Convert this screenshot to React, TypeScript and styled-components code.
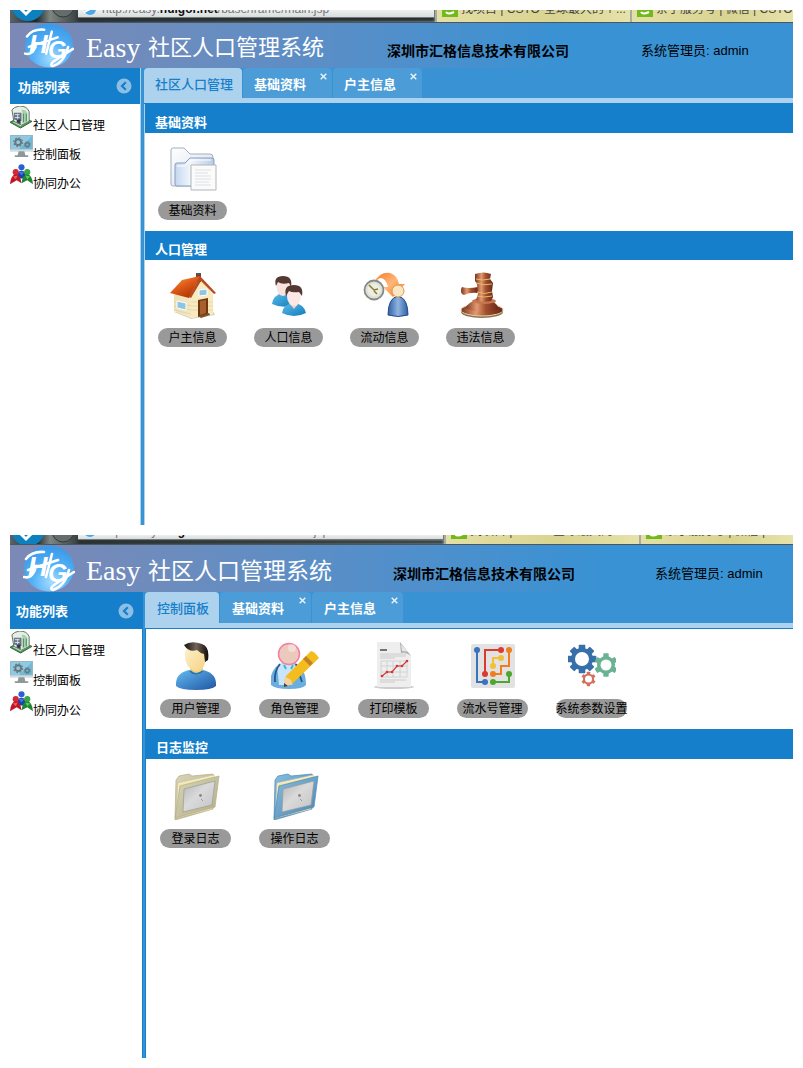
import React from "react";
import styled, { createGlobalStyle } from "styled-components";

const sans = `"Liberation Sans", "Noto Sans CJK SC", sans-serif`;
const blue = "#157fcc";
const midBlue = "#3892d4";
const paleBlue = "#add2ed";

const GlobalStyle = createGlobalStyle`
  * { box-sizing: border-box; }
  body { margin: 0; background: #fff; color: #000; font-family: ${sans}; font-size: 12px; }
  button { font: inherit; color: inherit; border: 0; padding: 0; background: none; cursor: pointer; }
  h1, h2, p, ul { margin: 0; padding: 0; font-weight: 400; }
  svg { display: block; }
`;

const Page = styled.main`
  min-height: 100vh;
  padding: 10px;
  display: grid;
  grid-template-rows: 515fr 523fr;
  gap: 10px;
`;

const Window = styled.section`
  display: flex;
  flex-direction: column;
  min-width: 0;
  overflow: hidden;
`;

const Chrome = styled.div<{ $h: number }>`
  display: flex;
  height: ${(p) => p.$h}px;
  overflow: hidden;
  border-bottom: 1px solid #4d565c;
  background: linear-gradient(90deg, #5c6468 0, #1d2628 26px, #7d8683 40px, #38403f 68px, #b9c4c2 440px);
`;

const NavArrows = styled.div`
  flex: 0 0 68px;
  svg { width: 68px; height: 12px; }
`;

const AddressBar = styled.div<{ $h: number }>`
  flex: 0 1 ${(p) => (p.$h > 10 ? 357 : 366)}px;
  overflow: hidden;
  background: linear-gradient(#edf0ef, #d7dddd);
  border-right: 1px solid #777;
  height: ${(p) => p.$h - 6}px;
  box-shadow: 0 1px #777, 0 5px 3px #263033;
`;

const ChromeLine = styled.div<{ $up: number }>`
  display: flex;
  gap: 5px;
  margin-top: -${(p) => p.$up}px;
  line-height: 16px;
  height: 16px;
  font-size: 12px;
  color: #777;
  white-space: nowrap;
  padding-left: 5px;
  b { color: #111; }
`;

const BrowserTab = styled.div<{ $grow?: boolean }>`
  flex: ${(p) => (p.$grow ? "1 1 0" : "0 0 195px")};
  overflow: hidden;
  border-left: 2px solid #a5aca4;
  background: linear-gradient(90deg, #e4dfa4, #d9d491 60%, #e6e2aa);
  ${ChromeLine} { color: #444; gap: 3px; }
  svg { width: 16px; height: 16px; flex: none; }
`;

const Banner = styled.header<{ $h: number; $reach: number }>`
  display: flex;
  align-items: center;
  height: ${(p) => p.$h}px;
  padding-left: 13px;
  white-space: nowrap;
  background: linear-gradient(90deg, #7c89b6 0, #6b8cbe 170px, #538fca 370px, ${midBlue} ${(p) => p.$reach}px);
`;

const LogoSvg = styled.svg<{ $h: number }>`
  flex: none;
  width: 52px;
  height: ${(p) => p.$h}px;
`;

const Title = styled.h1<{ $size: number }>`
  display: flex;
  align-items: center;
  padding: 4px 0 0 11px;
  line-height: 28px;
  color: #fff;
  font-size: ${(p) => p.$size}px;
`;

const Latin = styled.span`
  width: 62px;
  font-family: "Liberation Serif", serif;
  font-size: 28px;
`;

const Company = styled.p<{ $gap: number }>`
  margin-left: ${(p) => p.$gap}px;
  padding-top: 8px;
  font-size: 14px;
  font-weight: 700;
`;

const Account = styled.p<{ $gap: number }>`
  margin-left: ${(p) => p.$gap}px;
  padding-top: 8px;
  font-size: 13px;
`;

const Body = styled.div`
  flex: 1;
  display: flex;
  min-height: 0;
`;

const Sidebar = styled.nav<{ $w: number }>`
  flex: 0 0 ${(p) => p.$w}px;
`;

const SideHead = styled.div<{ $h: number; $pad: number }>`
  display: flex;
  align-items: center;
  justify-content: space-between;
  height: ${(p) => p.$h}px;
  padding: 0 8px 0 ${(p) => p.$pad}px;
  background: ${blue};
  color: #fff;
  h2 { font-size: 13px; font-weight: 700; }
  svg { width: 16px; height: 16px; }
`;

const SideList = styled.ul<{ $gap: number }>`
  list-style: none;
  padding-top: 2px;
  display: flex;
  flex-direction: column;
  gap: ${(p) => p.$gap}px;
`;

const SideLink = styled.a`
  display: flex;
  align-items: flex-end;
  height: 27px;
  color: #000;
  text-decoration: none;
  line-height: 14px;
  svg { width: 23px; height: 23px; align-self: flex-start; }
`;

const Splitter = styled.div<{ $w: number; $edge: string }>`
  flex: 0 0 ${(p) => p.$w}px;
  background: ${midBlue};
  border-left: 1px solid ${(p) => p.$edge};
`;

const Main = styled.div`
  flex: 1;
  min-width: 0;
  display: flex;
  flex-direction: column;
`;

const TabBar = styled.div<{ $h: number }>`
  display: flex;
  gap: 1px;
  height: ${(p) => p.$h}px;
  background: ${midBlue};
  border-bottom: 1px solid ${blue};
  box-shadow: inset 0 -5px ${paleBlue};
  padding-bottom: 5px;
`;

const TabItem = styled.div<{ $active?: boolean; $pad: number }>`
  position: relative;
  padding: 0 ${(p) => (p.$active ? p.$pad - 2 : p.$pad + 15)}px 0 ${(p) => p.$pad}px;
  border-radius: 4px 4px 0 0;
  background: ${(p) => (p.$active ? paleBlue : "#4b9cd7")};
  color: ${(p) => (p.$active ? blue : "#fff")};
`;

const TabButton = styled.button`
  height: 100%;
  font-size: 13px;
  font-weight: 700;
  white-space: nowrap;
  &[aria-selected="true"] { font-weight: 500; }
`;

const CloseButton = styled.button`
  position: absolute;
  top: 5px;
  right: 5px;
  svg { width: 7px; height: 7px; }
`;

const Panel = styled.div<{ $edge: string }>`
  flex: 1;
  border-left: 1px solid ${(p) => p.$edge};
`;

const SectionHead = styled.h2<{ $h: number }>`
  height: ${(p) => p.$h}px;
  padding: 8px 0 0 10px;
  background: ${blue};
  color: #fff;
  font-size: 13px;
  font-weight: 700;
  line-height: 22px;
`;

const Tiles = styled.div<{ $pad: number; $gap: number }>`
  display: flex;
  flex-wrap: wrap;
  gap: ${(p) => p.$gap}px;
  padding: ${(p) => p.$pad - 1}px ${(p) => p.$pad}px 11px;
`;

const Tile = styled.button<{ $w: number; $gap: number }>`
  display: flex;
  flex-direction: column;
  align-items: center;
  gap: ${(p) => p.$gap}px;
  width: ${(p) => p.$w}px;
  svg { width: 48px; height: 48px; }
`;

const Pill = styled.span`
  display: flex;
  justify-content: center;
  width: 100%;
  height: 19px;
  line-height: 20px;
  border-radius: 10px;
  background: #999;
  white-space: nowrap;
`;

function Logo({ id, h }: { id: string; h: number }) {
  return (
    <LogoSvg $h={h} viewBox="0 0 52 47" role="img" aria-label="HG">
      <defs>
        <radialGradient id={id} cx=".55" cy=".8" r=".75">
          <stop offset="0" stopColor="#a4dcff" />
          <stop offset=".5" stopColor="#55b2f7" />
          <stop offset="1" stopColor="#3b9ae9" />
        </radialGradient>
      </defs>
      <ellipse cx="26" cy="23.500" rx="25" ry="23" fill={`url(#${id})`} />
      <g fill="#fff" fontFamily="Liberation Sans, sans-serif" fontStyle="italic" fontWeight="700">
        <text x="5" y="31" fontSize="27">H</text>
        <text x="25" y="37" fontSize="25">G</text>
      </g>
      <path d="M3 14Q9 6 21 7M1 32Q8 34 12 25M5 25Q20 20 35 15M29 9 23 32M46 25Q42 41 30 45Q26 44 31 40Q40 34 51 27" fill="none" stroke="#fff" strokeWidth="2.600" strokeLinecap="round" />
    </LogoSvg>
  );
}

const Collapse = () => (
  <svg viewBox="0 0 16 16" aria-hidden="true">
    <circle cx="8" cy="8" r="7.500" fill="#8bbfe5" />
    <path d="M9.800 4.200 6 8l3.800 3.800" fill="none" stroke={blue} strokeWidth="2.200" />
  </svg>
);

const Close = () => (
  <svg viewBox="0 0 7 7" aria-hidden="true">
    <path d="m.7.7 5.600 5.600m0-5.600L.7 6.300" stroke="#eaf4fb" strokeWidth="1.400" />
  </svg>
);

const BuildingIcon = () => (
  <svg viewBox="0 0 24 24" aria-hidden="true">
    <path d="m0 17 9-5 14 4-12 7z" fill="#4c9b5c" stroke="#2b6237" />
    <path d="m3 17 8-4 9 3-9 5z" fill="#cfe6cf" />
    <path d="M2 4q2-3 8-4 8 0 10 6v10l-8 4-8-4z" fill="#e6eee6" stroke="#5c715f" />
    <path d="M4 7h8v9l-8-2z" fill="#6b7384" />
    <path d="M5 9h5M5 12h5M8 8v7" stroke="#d5dff0" />
    <path d="M12 4q4-1 6 3v9l-5 3V7z" fill="#a7d0ac" />
    <path d="M14 8v9M17 8v8" stroke="#4a8955" />
    <path d="M7 14h4v5l-4-2z" fill="#343c4b" />
  </svg>
);

const MonitorIcon = () => (
  <svg viewBox="0 0 24 24" aria-hidden="true">
    <path d="M0 0h24v17H0z" fill="#93b8c8" />
    <path d="M1 1h22v14H1z" fill="#6fb8d6" />
    <path d="M1 1h22L9 15H1z" fill="#8ecbe2" />
    <g fill="none" stroke="#69767c">
      <circle cx="8.500" cy="7.500" r="3" strokeWidth="2" />
      <circle cx="8.500" cy="7.500" r="4.600" strokeWidth="1.200" strokeDasharray="1.800 1.800" />
      <circle cx="18" cy="10" r="2" strokeWidth="1.500" />
      <circle cx="18" cy="10" r="3.200" strokeDasharray="1.200 1.300" />
    </g>
    <path d="M0 15h24v2H0z" fill="#d4dcdf" />
    <path d="M9 17h6l1 4h3v2H5v-2h3z" fill="#8f979b" />
  </svg>
);

const TeamIcon = () => (
  <svg viewBox="0 0 24 24" aria-hidden="true">
    <circle cx="12" cy="3.500" r="3.200" fill="#2b5fd8" />
    <path d="M6 15q1-8 6-8t6 8z" fill="#1d43a8" />
    <path d="m9 8 3 4 3-4" fill="#3b78ee" />
    <circle cx="6" cy="8.500" r="3.200" fill="#d32a34" />
    <path d="M0 21q1-10 6-10 5 0 6 9l-5-3z" fill="#bd1825" />
    <path d="m3 13 3 3 2-4" fill="#ef5b5f" />
    <circle cx="18" cy="8.500" r="3.200" fill="#39a743" />
    <path d="M12 20q1-9 6-9t6 10l-6-4z" fill="#208636" />
    <path d="m16 12 2 4 3-3" fill="#62c761" />
  </svg>
);

const FilesIcon = () => (
  <svg viewBox="0 0 48 48" aria-hidden="true">
    <defs>
      <linearGradient id="fileBack" x2="1" y2="1"><stop stopColor="#fff" /><stop offset="1" stopColor="#d5dce5" /></linearGradient>
      <linearGradient id="fileFront" x2="1"><stop stopColor="#c5d7ee" /><stop offset=".4" stopColor="#f1f6fc" /><stop offset="1" stopColor="#b6cbe6" /></linearGradient>
    </defs>
    <path d="M2 5q0-2 2-2h11l6 6h20q3 0 3 3v29H4q-2 0-2-2z" fill="url(#fileBack)" stroke="#a5afbb" />
    <path d="M6 20q0-2 2-2h8l5-5h22q2 0 2 2v26H8q-2 0-2-2z" fill="url(#fileFront)" stroke="#839fc4" />
    <path d="M8 21h8l6-6h20" fill="none" stroke="#fff" />
    <path d="M22 20h25v25H22z" fill="#fbfbfb" stroke="#b5b5b5" />
    <path d="M26 25h16M26 28h13M26 31h16M26 34h16M26 37h14M26 40h16" stroke="#dcdfe2" />
  </svg>
);

const HouseIcon = () => (
  <svg viewBox="0 0 48 48" aria-hidden="true">
    <defs>
      <linearGradient id="roof" x2=".7" y2="1"><stop stopColor="#ffa055" /><stop offset=".5" stopColor="#df5b17" /><stop offset="1" stopColor="#a93205" /></linearGradient>
      <linearGradient id="wall" x2="1"><stop stopColor="#eee0b4" /><stop offset="1" stopColor="#fff4d2" /></linearGradient>
    </defs>
    <path d="m5 40 17 7 24-4-2-4z" fill="#bbb89f" opacity=".6" />
    <path d="M5 23 22 11l11-4 11 15v20l-22 4L5 39z" fill="url(#wall)" />
    <path d="m22 26 12-17 10 14v19l-22 4z" fill="#f8e9be" />
    <path d="M22 30h22M22 34h22M22 38h22M5 30l17 4M5 34l17 4M5 38l17 4" stroke="#d9c792" strokeWidth=".5" />
    <path d="M27 2h5v8h-5z" fill="#8a3426" /><path d="M27 1h5v2h-5z" fill="#555" />
    <path d="M13 8 31 4 20 26 1 21z" fill="url(#roof)" />
    <path d="m31 4 16 17-2 1L32 9 22 26l-2-1z" fill="#b64c20" />
    <path d="m30 18 8-1v6l-8 1zM8 29l9 2v7l-9-2z" fill="#8bc6e4" stroke="#fff" />
    <path d="m29 28 10-2v16l-10 3z" fill="#713510" /><path d="m31 29 6-1v13l-6 2z" fill="#a7602d" />
    <path d="m29 44 11-3 1 2-9 3z" fill="#7c4e2b" />
  </svg>
);

const PeopleIcon = () => (
  <svg viewBox="0 0 48 48" aria-hidden="true">
    <defs><linearGradient id="peopleShirt" y2="1"><stop stopColor="#5abcec" /><stop offset="1" stopColor="#137db8" /></linearGradient></defs>
    <path d="M7 32q1-9 11-11 9 0 11 12-11 4-22-1z" fill="url(#peopleShirt)" />
    <ellipse cx="18" cy="15" rx="6.500" ry="9" fill="#fae2de" />
    <path d="M11 14Q8 4 18 4q10 0 8 11l-2-4q-7 2-11-1z" fill="#543932" />
    <path d="M17 41q1-9 12-10 10 1 12 10-12 6-24 0z" fill="url(#peopleShirt)" />
    <path d="m24 31 5 6 5-6z" fill="#f4cdca" />
    <ellipse cx="29" cy="24" rx="7" ry="10" fill="#fde8e5" />
    <path d="M21 24q-3-11 8-11 10 0 8 11l-3-4q-7 1-10-1z" fill="#543932" />
  </svg>
);

const FlowIcon = () => (
  <svg viewBox="0 0 48 48" aria-hidden="true">
    <defs>
      <linearGradient id="arrowOrange" x2="1" y2="1"><stop stopColor="#f47a26" /><stop offset=".5" stopColor="#ffb679" /><stop offset="1" stopColor="#f37719" /></linearGradient>
      <linearGradient id="coat" x2="1"><stop stopColor="#315ea7" /><stop offset=".5" stopColor="#8eb4de" /><stop offset="1" stopColor="#315ea7" /></linearGradient>
    </defs>
    <path d="M13 10Q20-1 29 1q8 3 9 11h6L32 25 22 15h5Q25 6 19 6z" fill="url(#arrowOrange)" />
    <circle cx="13" cy="18" r="9.500" fill="#dce0d7" stroke="#858a86" strokeWidth="1.800" />
    <circle cx="13" cy="18" r="6.500" fill="#eceee4" />
    <path d="m8 13 5 5 4-1M13 19l3 3" fill="none" stroke="#8b7c2b" strokeWidth="1.500" />
    <path d="M27 43q0-17 10-19 10 2 10 19-10 3-20 0z" fill="url(#coat)" stroke="#274d8c" />
    <circle cx="37" cy="19" r="6" fill="#fbe6c3" stroke="#d69d54" />
  </svg>
);

const GavelIcon = () => (
  <svg viewBox="0 0 48 48" aria-hidden="true">
    <defs><linearGradient id="gavelWood" x2="1"><stop stopColor="#78331f" /><stop offset=".35" stopColor="#e49a70" /><stop offset=".6" stopColor="#a3502f" /><stop offset="1" stopColor="#662818" /></linearGradient></defs>
    <ellipse cx="25" cy="40" rx="21" ry="6" fill="#8b7556" />
    <ellipse cx="25" cy="38" rx="21" ry="6" fill="url(#gavelWood)" stroke="#e4cf9c" />
    <path d="M8 36q5-7 12-8l14 1q6 2 8 8-16 7-34-1z" fill="url(#gavelWood)" />
    <ellipse cx="27" cy="29" rx="12" ry="3" fill="#c67650" />
    <path d="M5 15q6 2 16 0v6q-8-1-14 2-3-1-3-4 0-3 1-4z" fill="url(#gavelWood)" />
    <path d="M18 2q9-3 16 0l-1 5 3 4-1 8 1 6-2 4q-8 2-15-1l2-6-1-10-2-3z" fill="url(#gavelWood)" />
    <path d="M19 7q7 2 14 0M19 11q8 3 16 1M20 20q8 3 15 0M20 24q7 2 15 0" fill="none" stroke="#e9ba66" />
  </svg>
);

const UserIcon = () => (
  <svg viewBox="0 0 48 48" aria-hidden="true">
    <defs>
      <linearGradient id="userShirt" y2="1"><stop stopColor="#63bdf3" /><stop offset="1" stopColor="#2053a1" /></linearGradient>
      <linearGradient id="skin" x2="1" y2="1"><stop stopColor="#fff2ca" /><stop offset="1" stopColor="#f6d185" /></linearGradient>
      <linearGradient id="hair" x2="1"><stop stopColor="#111" /><stop offset=".5" stopColor="#74655a" /><stop offset="1" stopColor="#100c08" /></linearGradient>
    </defs>
    <path d="M4 44q-1-13 13-16h14q14 3 13 16-4 4-20 4T4 44z" fill="url(#userShirt)" />
    <path d="M18 23h13v7q-6 6-13 0z" fill="#f4cf75" />
    <path d="M13 10q1-7 12-6 10 1 9 12-1 12-9 13Q12 27 13 10z" fill="url(#skin)" />
    <path d="M12 3q7-5 18-1 8 3 6 16l-3 2-1-8q-4-1-7-4-8 3-13-5z" fill="url(#hair)" />
    <path d="M18 29q6 6 13 0" fill="none" stroke="#2575bf" strokeWidth="2" />
  </svg>
);

const RoleIcon = () => (
  <svg viewBox="0 0 48 48" aria-hidden="true">
    <path d="M0 43V34q3-11 12-13h12q11 5 11 22-3 4-17 4T0 43z" fill="#6baddc" />
    <path d="M6 24q11-9 22 2l-7 17H8z" fill="#c8e5fb" />
    <path d="M9 22q-6 7-5 18M25 22l6 18" stroke="#24568f" strokeWidth="1.800" fill="none" />
    <path d="m13 23 2 4M22 23l-2 4" stroke="#37bdd0" strokeWidth="2" />
    <circle cx="18" cy="12" r="10.500" fill="#ebc9bd" stroke="#f37fa3" strokeWidth="1.500" />
    <circle cx="21" cy="6" r="4" fill="#fff" opacity=".4" />
    <path d="M40 9q3 0 8 7L21 42l-8 3 1-10z" fill="#f4bd1d" />
    <path d="m35 14 7 7-3 3-7-7z" fill="#bf842a" />
    <path d="m14 35-1 10 8-3-1-4-5-3z" fill="#f2d2a1" /><path d="m13 41 4 3-4 1z" fill="#374646" />
  </svg>
);

const ReportIcon = () => (
  <svg viewBox="0 0 48 48" aria-hidden="true">
    <ellipse cx="24" cy="45" rx="20" ry="2" fill="#ccc" />
    <path d="M7 0h23l11 13v32H7z" fill="#eee" />
    <path d="m30 0 11 14q-6-5-10-3z" fill="#aaa" /><path d="m31 2 7 8q-4-1-6-1z" fill="#e8e8e8" />
    <path d="M10 8h7" stroke="#222" strokeWidth="1.200" /><path d="M10 12h26M10 14h26M10 16h15" stroke="#c2c2c2" strokeWidth=".8" />
    <path d="M11 19h26v16H11zM17 19v16M23 19v16M30 19v16M11 24h26M11 30h26" fill="none" stroke="#ccc" strokeWidth=".8" />
    <path d="m12 34 5-4h5l5-6h5l5-5" fill="none" stroke="#d33438" strokeWidth="1.200" />
    <g fill="#d33438"><circle cx="12" cy="34" r="1.300" /><circle cx="17" cy="30" r="1.300" /><circle cx="22" cy="30" r="1.300" /><circle cx="27" cy="24" r="1.300" /><circle cx="32" cy="24" r="1.300" /><circle cx="37" cy="19" r="1.300" /></g>
    <path d="M10 38h26M10 40h15" stroke="#c2c2c2" strokeWidth=".8" />
  </svg>
);

const SerialIcon = () => (
  <svg viewBox="0 0 48 48" aria-hidden="true">
    <rect x="2" y="2" width="44" height="44" rx="2" fill="#e2e2e2" />
    <g fill="none" strokeWidth="2">
      <path d="M8 8v32h8" stroke="#3873bd" /><path d="M32 8H16v24" stroke="#dc392f" />
      <path d="M32 16h-8v8" stroke="#f2bf36" /><path d="M40 8v16h-8v8h-8" stroke="#f07d20" /><path d="M40 32v8H24" stroke="#4ba72f" />
    </g>
    <g fill="#3873bd"><circle cx="8" cy="8" r="3" /><circle cx="16" cy="40" r="3" /></g>
    <g fill="#dc392f"><circle cx="32" cy="8" r="3" /><circle cx="16" cy="32" r="3" /></g>
    <g fill="#f2bf36"><circle cx="32" cy="16" r="3" /><circle cx="24" cy="24" r="3" /></g>
    <g fill="#f07d20"><circle cx="40" cy="8" r="3" /><circle cx="24" cy="32" r="3" /></g>
    <g fill="#4ba72f"><circle cx="40" cy="32" r="3" /><circle cx="24" cy="40" r="3" /></g>
  </svg>
);

function Gear({ x, y, r, w, color, teeth }: { x: number; y: number; r: number; w: number; color: string; teeth: number }) {
  return (
    <g transform={`translate(${x} ${y})`}>
      {Array.from({ length: teeth }, (_, i) => (
        <rect key={i} x={-r * 0.3} y={-r * 1.3} width={r * 0.6} height={r * 0.5} rx={r * 0.08} fill={color} transform={`rotate(${(i * 360) / teeth})`} />
      ))}
      <circle r={r - w / 2} fill="none" stroke={color} strokeWidth={w} />
    </g>
  );
}

const GearsIcon = () => (
  <svg viewBox="0 0 48 48" aria-hidden="true">
    <Gear x={14} y={17} r={11} w={4} color="#376faa" teeth={8} />
    <Gear x={38} y={23} r={9} w={3.5} color="#69b292" teeth={6} />
    <Gear x={20.5} y={37} r={5.5} w={2} color="#d0705d" teeth={6} />
  </svg>
);

function FolderIcon({ id, light, dark }: { id: string; light: string; dark: string }) {
  return (
    <svg viewBox="0 0 48 48" aria-hidden="true">
      <defs>
        <linearGradient id={id} x2="1" y2="1"><stop stopColor={light} /><stop offset="1" stopColor={dark} /></linearGradient>
        <linearGradient id={`${id}Plate`} x2="1" y2="1"><stop stopColor="#b4b4b4" /><stop offset=".45" stopColor="#dadada" /><stop offset="1" stopColor="#c2c2c2" /></linearGradient>
      </defs>
      <path d="m4 8 3-4 10-2 3 2 21-2 2 4-2 31-38 11z" fill={`url(#${id})`} stroke={dark} strokeWidth=".7" />
      <path d="m6 11 36-8 1 4-3 30L4 46z" fill="#f4f1e4" stroke="#c9c3aa" strokeWidth=".6" />
      <path d="m7 12 36-8v5l-4 28L4 46z" fill="#f5e79c" />
      <path d="M8 14 47 4l-4 31L3 46z" fill={`url(#${id})`} stroke={dark} strokeWidth=".7" />
      <path d="m12 17 31-8-3 24-29 7z" fill={`url(#${id}Plate)`} stroke="#999" strokeWidth=".7" />
      <circle cx="28.500" cy="23.500" r="1.400" fill="#888" /><path d="m29 27 2 2" stroke="#999" />
    </svg>
  );
}

const SiteIcon = () => (
  <svg viewBox="0 0 16 16" aria-hidden="true"><path d="M0 0h16v16H0z" fill="#72b91b" /><path d="M4 11q2 3 8 0" fill="none" stroke="#fff" strokeWidth="2" /></svg>
);

type TileData = { label: string; icon: React.ReactNode };
type Group = { heading?: string; tiles: TileData[] };
type Metrics = {
  chrome: number; lift: number; banner: number; title: number; companyGap: number; accountGap: number; reach: number;
  side: number; sidePad: number; head: number; listGap: number; split: number; edge: string; tabPad: number;
  sectionHead: number; pad: number; tile: number; tileGap: number; iconGap: number;
};

const first: Metrics = {
  chrome: 13, lift: 9, banner: 45, title: 22, companyGap: 63, accountGap: 72, reach: 560,
  side: 130, sidePad: 8, head: 36, listGap: 2, split: 4, edge: paleBlue, tabPad: 11,
  sectionHead: 29, pad: 13, tile: 69, tileGap: 27, iconGap: 8,
};

const second: Metrics = {
  chrome: 10, lift: 12, banner: 47, title: 23, companyGap: 61, accountGap: 80, reach: 600,
  side: 132, sidePad: 6, head: 37, listGap: 3, split: 3, edge: blue, tabPad: 12,
  sectionHead: 30, pad: 14, tile: 71, tileGap: 28, iconGap: 9,
};

function AppWindow({ id, m, tabs, groups }: { id: string; m: Metrics; tabs: string[]; groups: Group[] }) {
  return (
    <Window>
      <Chrome $h={m.chrome}>
        <NavArrows>
          <svg viewBox="0 0 68 12" aria-hidden="true">
            <circle cx="18" cy="-6" r="17" fill="#0c81bd" />
            <path d="m9-3 7 7 6-6" fill="none" stroke="#fff" strokeWidth="3" />
            <circle cx="53" cy="-4" r="11" fill="#656d6c" stroke="#30393a" />
          </svg>
        </NavArrows>
        <AddressBar $h={m.chrome}>
          <ChromeLine $up={m.lift}>
            <svg width="14" height="16" viewBox="0 0 14 16" aria-hidden="true"><circle cx="7" cy="8" r="6" fill="#49a8ea" /><path d="M1 11 13 5" stroke="#fff" strokeWidth="2" /></svg>
            <span>http://easy.<b>huigor.net</b>/base/frame/main.jsp</span>
          </ChromeLine>
        </AddressBar>
        <BrowserTab><ChromeLine $up={m.lift}><SiteIcon />找项目 | CSTO-全球最大的个...</ChromeLine></BrowserTab>
        <BrowserTab $grow><ChromeLine $up={m.lift}><SiteIcon />亲子服务号 | 微信 | CSTO</ChromeLine></BrowserTab>
      </Chrome>
      <Banner $h={m.banner} $reach={m.reach}>
        <Logo id={`${id}-logo`} h={m.banner} />
        <Title $size={m.title}><Latin>Easy</Latin>社区人口管理系统</Title>
        <Company $gap={m.companyGap}>深圳市汇格信息技术有限公司</Company>
        <Account $gap={m.accountGap}>系统管理员: admin</Account>
      </Banner>
      <Body>
        <Sidebar $w={m.side} aria-label="功能列表">
          <SideHead $h={m.head} $pad={m.sidePad}>
            <h2>功能列表</h2>
            <button type="button" aria-label="收起"><Collapse /></button>
          </SideHead>
          <SideList $gap={m.listGap}>
            <li><SideLink href="#community"><BuildingIcon />社区人口管理</SideLink></li>
            <li><SideLink href="#panel"><MonitorIcon />控制面板</SideLink></li>
            <li><SideLink href="#office"><TeamIcon />协同办公</SideLink></li>
          </SideList>
        </Sidebar>
        <Splitter $w={m.split} $edge={m.edge} />
        <Main>
          <TabBar $h={m.head} role="tablist">
            {tabs.map((t, i) => (
              <TabItem key={t} $active={i === 0} $pad={m.tabPad} role="presentation">
                <TabButton type="button" role="tab" aria-selected={i === 0}>{t}</TabButton>
                {i > 0 && <CloseButton type="button" aria-label={`关闭${t}`}><Close /></CloseButton>}
              </TabItem>
            ))}
          </TabBar>
          <Panel $edge={m.edge}>
            {groups.map((g) => (
              <section key={g.tiles[0].label}>
                {g.heading && <SectionHead $h={m.sectionHead}>{g.heading}</SectionHead>}
                <Tiles $pad={m.pad} $gap={m.tileGap}>
                  {g.tiles.map((t) => (
                    <Tile key={t.label} type="button" $w={m.tile} $gap={m.iconGap}>
                      {t.icon}
                      <Pill>{t.label}</Pill>
                    </Tile>
                  ))}
                </Tiles>
              </section>
            ))}
          </Panel>
        </Main>
      </Body>
    </Window>
  );
}

const communityGroups: Group[] = [
  { heading: "基础资料", tiles: [{ label: "基础资料", icon: <FilesIcon /> }] },
  {
    heading: "人口管理",
    tiles: [
      { label: "户主信息", icon: <HouseIcon /> },
      { label: "人口信息", icon: <PeopleIcon /> },
      { label: "流动信息", icon: <FlowIcon /> },
      { label: "违法信息", icon: <GavelIcon /> },
    ],
  },
];

const controlGroups: Group[] = [
  {
    tiles: [
      { label: "用户管理", icon: <UserIcon /> },
      { label: "角色管理", icon: <RoleIcon /> },
      { label: "打印模板", icon: <ReportIcon /> },
      { label: "流水号管理", icon: <SerialIcon /> },
      { label: "系统参数设置", icon: <GearsIcon /> },
    ],
  },
  {
    heading: "日志监控",
    tiles: [
      { label: "登录日志", icon: <FolderIcon id="tan" light="#d9d5b5" dark="#b3ad88" /> },
      { label: "操作日志", icon: <FolderIcon id="azure" light="#86bde0" dark="#4d86b3" /> },
    ],
  },
];

export default function App() {
  return (
    <>
      <GlobalStyle />
      <Page>
        <AppWindow id="community" m={first} tabs={["社区人口管理", "基础资料", "户主信息"]} groups={communityGroups} />
        <AppWindow id="control" m={second} tabs={["控制面板", "基础资料", "户主信息"]} groups={controlGroups} />
      </Page>
    </>
  );
}
